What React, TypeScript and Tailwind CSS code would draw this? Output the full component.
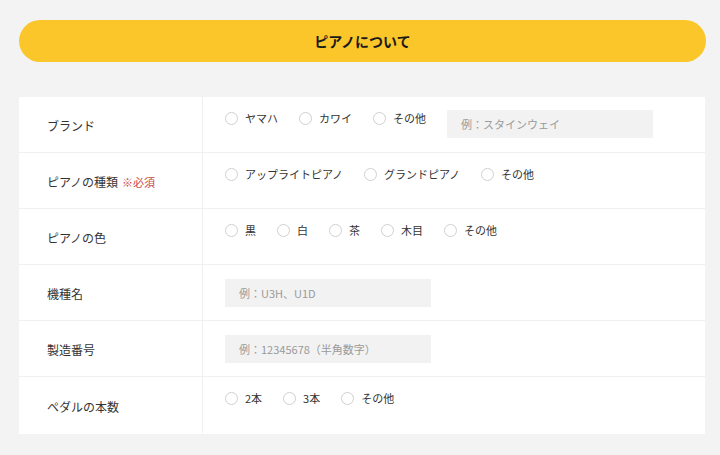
type Field =
  | { kind: "radio"; label: string; required?: boolean; options: string[]; other?: string }
  | { kind: "text"; label: string; placeholder: string };

const fields: Field[] = [
  { kind: "radio", label: "ブランド", options: ["ヤマハ", "カワイ", "その他"], other: "例：スタインウェイ" },
  { kind: "radio", label: "ピアノの種類", required: true, options: ["アップライトピアノ", "グランドピアノ", "その他"] },
  { kind: "radio", label: "ピアノの色", options: ["黒", "白", "茶", "木目", "その他"] },
  { kind: "text", label: "機種名", placeholder: "例：U3H、U1D" },
  { kind: "text", label: "製造番号", placeholder: "例：12345678（半角数字）" },
  { kind: "radio", label: "ペダルの本数", options: ["2本", "3本", "その他"] },
];

function Radio({ name, label }: { name: string; label: string }) {
  return (
    <label className="flex h-4 cursor-pointer items-center gap-[7px] text-[11px] text-[#333]">
      <input className="peer sr-only" name={name} type="radio" />
      <span className="size-[13px] rounded-full border border-[#cfcfcf] bg-white peer-checked:border-[4px] peer-checked:border-[#fbc62a]" />
      <span>{label}</span>
    </label>
  );
}

function TextBox({ placeholder }: { placeholder: string }) {
  return (
    <input
      className="h-[28px] w-[206px] bg-[#f2f2f2] px-[14px] text-[11px] text-[#333] outline-none placeholder:text-[#9a9a9a]"
      placeholder={placeholder}
      type="text"
    />
  );
}

export default function App() {
  return (
    <div
      className="min-h-[455px] bg-[#f3f3f3] pt-[20px] pr-[14px] pb-[21px] pl-[19px]"
      style={{ fontFamily: '"Noto Sans CJK JP", "Noto Sans", sans-serif' }}
    >
      <h2 className="flex h-[42px] items-center justify-center rounded-full bg-[#fbc62a] text-[14px] font-bold text-[#1a1a1a]">
        ピアノについて
      </h2>
      <div className="mt-[35px] mr-px bg-white pb-px">
        {fields.map((field, index) => (
          <div
            className={`flex h-[56px] ${index < fields.length - 1 ? "border-b border-[#f0f0f0]" : ""}`}
            key={field.label}
          >
            <div className="flex w-[184px] shrink-0 items-center border-r border-[#f0f0f0] pt-[3px] pl-[28px] text-[12px] text-[#333]">
              {field.label}
              {field.kind === "radio" && field.required && (
                <span className="ml-[4px] text-[11px] text-[#c8484a]">※必須</span>
              )}
            </div>
            {field.kind === "radio" ? (
              <div className="flex flex-1 items-start gap-[21px] pt-[13px] pl-[22px]">
                {field.options.map((option) => (
                  <Radio key={option} label={option} name={field.label} />
                ))}
                {field.other && <TextBox placeholder={field.other} />}
              </div>
            ) : (
              <div className="flex flex-1 items-center pt-px pl-[22px]">
                <TextBox placeholder={field.placeholder} />
              </div>
            )}
          </div>
        ))}
      </div>
    </div>
  );
}
